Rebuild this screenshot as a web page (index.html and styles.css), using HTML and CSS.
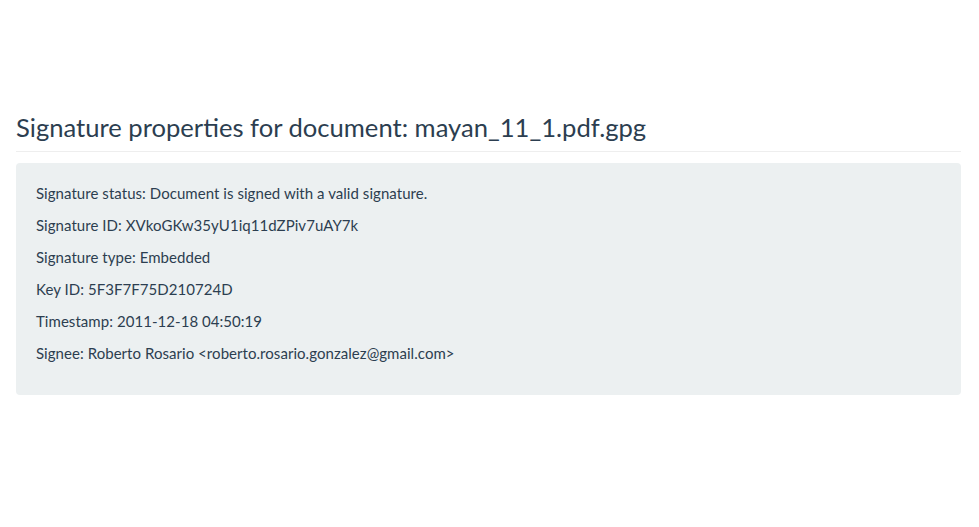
FILE: index.html
```html
<!DOCTYPE html>
<html>
<head>
<meta charset="utf-8">
<link rel="stylesheet" href="styles.css">
</head>
<body>
<div class="container">
  <div class="page-header">
    <h3 class="title">Signature properties for document: mayan_11_1.pdf.gpg</h3>
  </div>
  <div class="well">
    <p>Signature status: Document is signed with a valid signature.</p>
    <p>Signature ID: XVkoGKw35yU1iq11dZPiv7uAY7k</p>
    <p>Signature type: Embedded</p>
    <p>Key ID: 5F3F7F75D210724D</p>
    <p>Timestamp: 2011-12-18 04:50:19</p>
    <p>Signee: Roberto Rosario &lt;roberto.rosario.gonzalez@gmail.com&gt;</p>
  </div>
</div>
</body>
</html>
```
FILE: styles.css
```css
html, body {
  margin: 0;
  padding: 0;
  background: #ffffff;
}
body {
  font-family: Lato, "Open Sans", sans-serif;
  font-size: 15px;
  line-height: 1.42857;
  color: #2c3e50;
}
.container {
  padding: 0 18px 0 16px;
}
.page-header {
  margin: 113px 0 11px;
  padding-bottom: 9px;
  border-bottom: 1px solid #eeeeee;
}
.title {
  margin: 0;
  font-size: 25.6px;
  font-weight: 400;
  line-height: 1.12;
  color: #2c3e50;
}
.well {
  background: #ecf0f1;
  border: 1px solid transparent;
  border-radius: 4px;
  padding: 19px;
}
.well p {
  margin: 0 0 10.7px;
  letter-spacing: 0.05px;
}
```
